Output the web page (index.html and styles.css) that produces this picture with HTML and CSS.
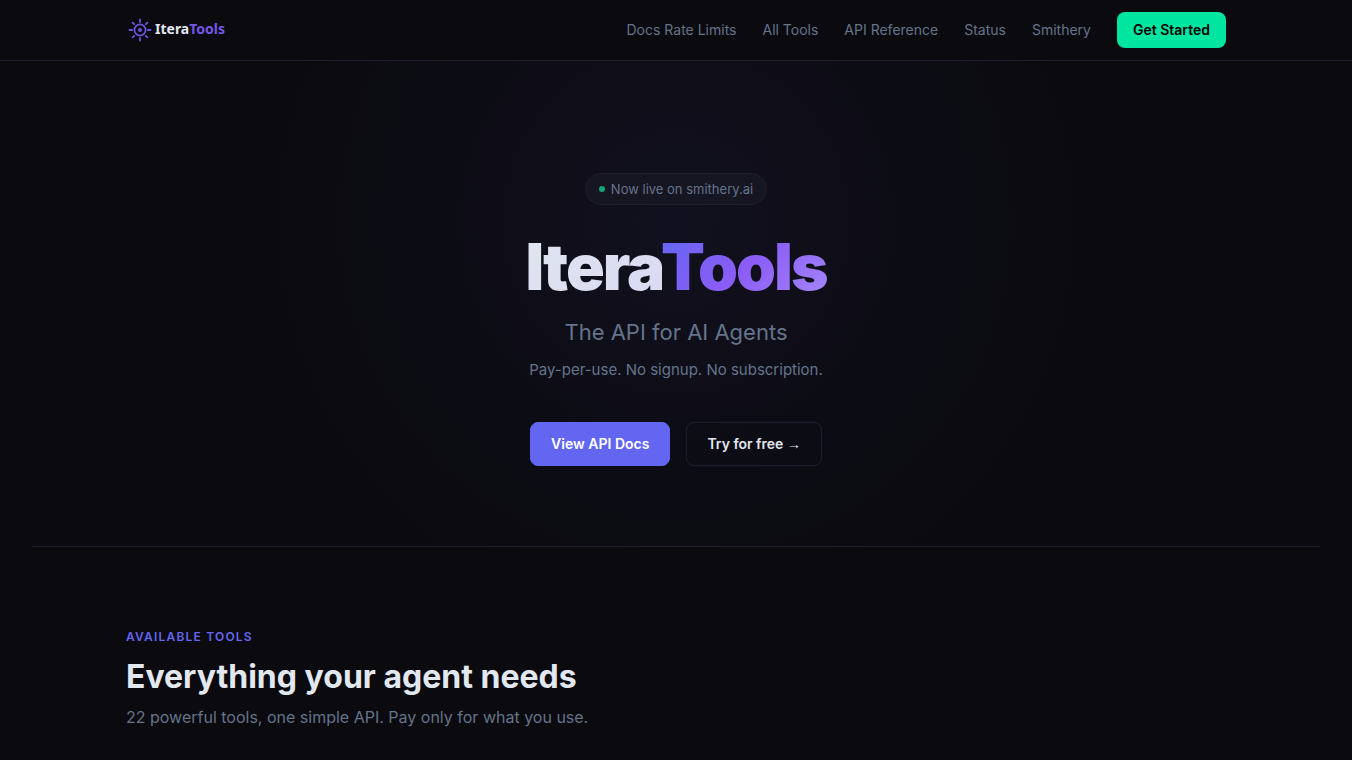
FILE: index.html
```html
<!DOCTYPE html>
<html lang="en">
<head>
<meta charset="utf-8">
<meta name="viewport" content="width=device-width, initial-scale=1">
<title>IteraTools</title>
<link rel="stylesheet" href="styles.css">
</head>
<body>
<header class="site-header">
  <div class="container nav">
    <a class="logo" href="#" aria-label="IteraTools">
      <svg class="logo-mark" viewBox="0 0 28 28" aria-hidden="true">
        <g fill="none" stroke="currentColor" stroke-width="1.8" stroke-linecap="round">
          <circle cx="14" cy="14" r="5.6"/>
          <path d="M14 3.5v2.600M14 21.900v2.600M3.500 14h2.600M21.900 14h2.600M6.600 6.600l1.600 1.600M19.800 19.800l1.600 1.600M6.600 21.400l1.600-1.600M19.800 8.200l1.600-1.600"/>
        </g>
        <circle cx="14" cy="14" r="2" fill="currentColor"/>
      </svg>
      <span class="logo-text">Itera<span class="logo-accent">Tools</span></span>
    </a>
    <nav class="nav-links" aria-label="Main">
      <a href="#">Docs Rate Limits</a>
      <a href="#">All Tools</a>
      <a href="#">API Reference</a>
      <a href="#">Status</a>
      <a href="#">Smithery</a>
      <a class="nav-cta" href="#">Get Started</a>
    </nav>
  </div>
</header>
<main>
  <section class="hero">
    <div class="badge"><span class="badge-dot"></span>Now live on smithery.ai</div>
    <h1 class="hero-title"><span class="title-light">Itera</span><span class="title-accent">Tools</span></h1>
    <p class="hero-tagline">The API for AI Agents</p>
    <p class="hero-sub">Pay-per-use. No signup. No subscription.</p>
    <div class="hero-actions">
      <a class="btn btn-primary" href="#">View API Docs</a>
      <a class="btn btn-outline" href="#tools">Try for free <span class="arrow">→</span></a>
    </div>
  </section>
  <hr class="divider">
  <section class="container tools" id="tools">
    <p class="section-label">Available Tools</p>
    <h2 class="section-title">Everything your agent needs</h2>
    <p class="section-sub">22 powerful tools, one simple API. Pay only for what you use.</p>
  </section>
</main>
</body>
</html>
```
FILE: styles.css
```css
* {
  box-sizing: border-box;
  margin: 0;
  padding: 0;
}

body {
  background: #0a0a0f;
  color: #e2e8f0;
  font-family: Inter, "Liberation Sans", sans-serif;
  font-size: 16px;
  line-height: 26px;
}

a {
  color: inherit;
  text-decoration: none;
}

.container {
  max-width: 1148px;
  margin: 0 auto;
  padding: 0 24px;
}

.site-header {
  border-bottom: 1px solid #1e1e2e;
}

.nav {
  display: flex;
  align-items: center;
  justify-content: space-between;
  height: 60px;
}

.logo {
  display: flex;
  align-items: center;
  gap: 1px;
}

.logo-mark {
  width: 28px;
  height: 28px;
  color: #6c54da;
}

.logo-text {
  font-family: "Noto Sans", sans-serif;
  font-size: 14px;
  font-weight: 700;
  line-height: 20px;
  padding-bottom: 2px;
}

.logo-accent {
  color: #7357e6;
}

.nav-links {
  display: flex;
  align-items: center;
  gap: 26px;
  color: #64748b;
  font-size: 14px;
}

.nav-cta {
  padding: 5px 16px;
  border-radius: 8px;
  background: #00e5a0;
  color: #000;
  font-weight: 600;
}

.hero {
  display: flex;
  flex-direction: column;
  align-items: center;
  padding: 112px 24px 80px;
  text-align: center;
  background: radial-gradient(circle 410px at 50% 160px, #11101e 0%, #0a0a0f 100%);
}

.badge {
  display: flex;
  align-items: center;
  gap: 6px;
  height: 32px;
  padding: 0 13px;
  margin-bottom: 28px;
  border: 1px solid #1f1e2f;
  border-radius: 16px;
  background: #161522;
  color: #64748b;
  font-size: 13px;
}

.badge-dot {
  width: 6px;
  height: 6px;
  border-radius: 50%;
  background: #10a777;
}

.hero-title {
  margin-bottom: 14px;
  font-size: 64px;
  font-weight: 900;
  line-height: 68px;
  letter-spacing: -2px;
}

.title-light,
.title-accent {
  -webkit-background-clip: text;
  background-clip: text;
  color: transparent;
}

/* The padding keeps the tight last letter inside the clipped background. */
.title-light {
  margin-right: -6px;
  padding-right: 4px;
  background-image: linear-gradient(135deg, #e0e6f0, #d8d9f2);
}

.title-accent {
  margin-right: -4px;
  padding-right: 4px;
  background-image: linear-gradient(135deg, #6366f1, #8b5cf6 50%, #a78bfa);
}

.hero-tagline {
  margin-bottom: 8px;
  color: #64748b;
  font-size: 22px;
  line-height: 34px;
}

.hero-sub {
  margin-bottom: 40px;
  color: #64748b;
  font-size: 15px;
  line-height: 25px;
}

.hero-actions {
  display: flex;
  gap: 16px;
}

.btn {
  padding: 8px 20px;
  border: 1px solid #1e1e2e;
  border-radius: 8px;
  font-size: 14px;
  font-weight: 600;
}

.btn-primary {
  border-color: #6366f1;
  background: #6366f1;
  color: #fff;
}

.arrow {
  font-family: "Liberation Sans", sans-serif;
  font-weight: 400;
}

.divider {
  height: 1px;
  margin: 0 32px;
  border: 0;
  background: #1e1e2e;
}

.tools {
  padding-top: 80px;
  padding-bottom: 32px;
}

.section-label {
  margin-bottom: 8px;
  color: #6366f1;
  font-size: 12px;
  font-weight: 600;
  line-height: 20px;
  letter-spacing: 0.1em;
  text-transform: uppercase;
}

.section-title {
  margin-bottom: 5px;
  font-size: 32px;
  font-weight: 700;
  line-height: 44px;
}

.section-sub {
  color: #64748b;
}
```
